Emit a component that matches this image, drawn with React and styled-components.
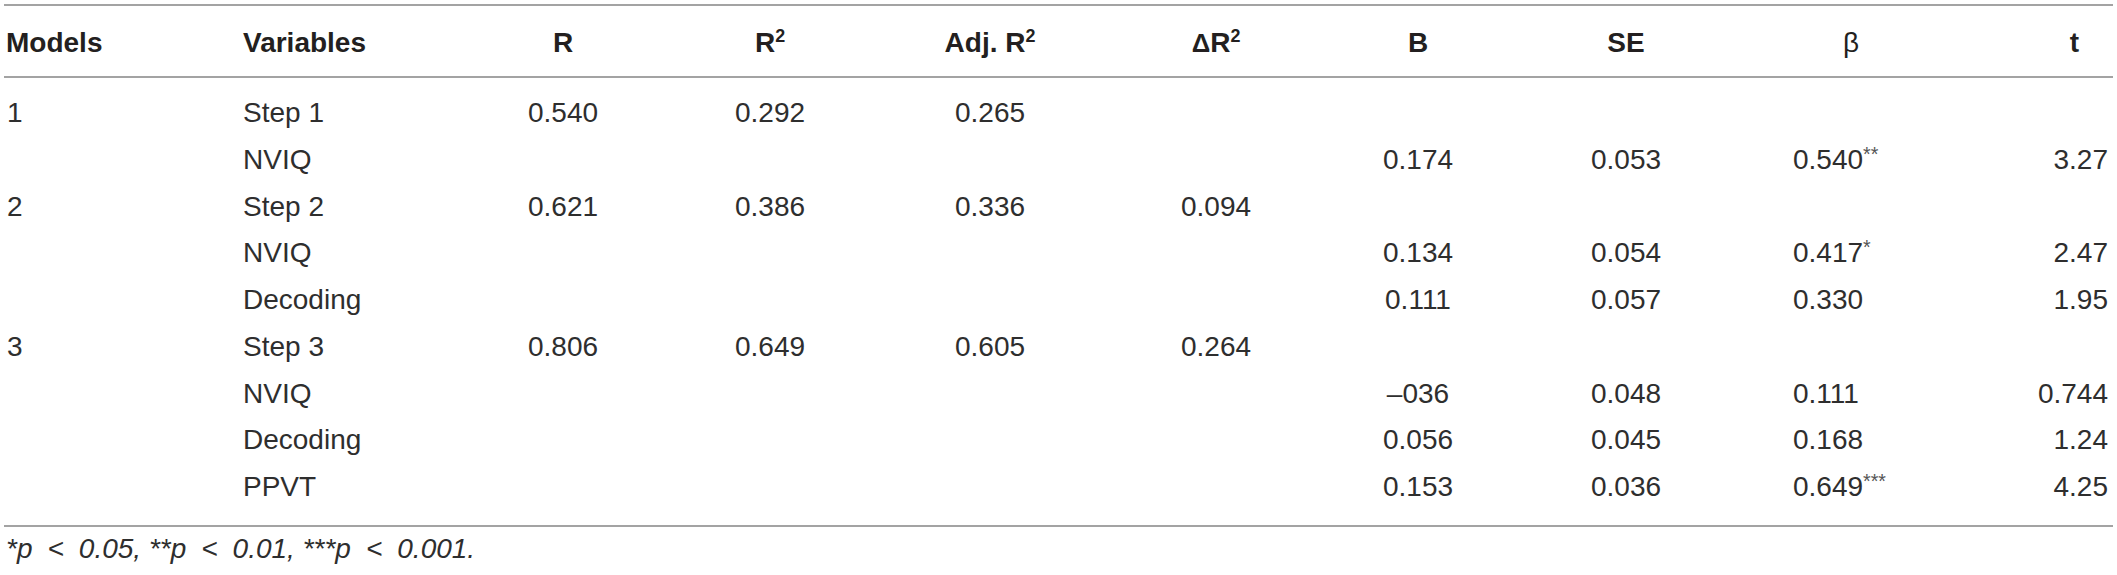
import React from 'react'
import styled, { createGlobalStyle } from 'styled-components'

const COLS = '239px 220px 200px 214px 226px 226px 178px 238px 212px 156px'

const rows = [
  { m: '1', v: 'Step 1', r: '0.540', r2: '0.292', adj: '0.265' },
  { v: 'NVIQ', b: '0.174', se: '0.053', beta: '0.540', stars: '**', t: '3.27' },
  { m: '2', v: 'Step 2', r: '0.621', r2: '0.386', adj: '0.336', dr2: '0.094' },
  { v: 'NVIQ', b: '0.134', se: '0.054', beta: '0.417', stars: '*', t: '2.47' },
  { v: 'Decoding', b: '0.111', se: '0.057', beta: '0.330', t: '1.95' },
  { m: '3', v: 'Step 3', r: '0.806', r2: '0.649', adj: '0.605', dr2: '0.264' },
  { v: 'NVIQ', b: '\u2013036', se: '0.048', beta: '0.111', t: '0.744' },
  { v: 'Decoding', b: '0.056', se: '0.045', beta: '0.168', t: '1.24' },
  { v: 'PPVT', b: '0.153', se: '0.036', beta: '0.649', stars: '***', t: '4.25' },
]

const App = () => {
  return (
    <>
      <GlobalStyle />
      <Page>
        <Table>
          <HeadRow>
            <Cell $pl={2}>Models</Cell>
            <Cell>Variables</Cell>
            <Cell $align="center">R</Cell>
            <Cell $align="center">R<Sup>2</Sup></Cell>
            <Cell $align="center">Adj. R<Sup>2</Sup></Cell>
            <Cell $align="center"><Delta>Δ</Delta>R<Sup>2</Sup></Cell>
            <Cell $align="center">B</Cell>
            <Cell $align="center">SE</Cell>
            <Cell $align="center"><Beta>β</Beta></Cell>
            <Cell $align="right" $pr={34}>t</Cell>
          </HeadRow>

          <Body>
            {rows.map((row, i) => (
              <Row key={i}>
                <Cell $pl={3}>{row.m}</Cell>
                <Cell>{row.v}</Cell>
                <Cell $align="center">{row.r}</Cell>
                <Cell $align="center">{row.r2}</Cell>
                <Cell $align="center">{row.adj}</Cell>
                <Cell $align="center">{row.dr2}</Cell>
                <Cell $align="center">{row.b}</Cell>
                <Cell $align="center">{row.se}</Cell>
                <Cell $pl={48}>
                  {row.beta}
                  {row.stars && <Stars>{row.stars}</Stars>}
                </Cell>
                <Cell $align="right" $pr={5}>{row.t}</Cell>
              </Row>
            ))}
          </Body>
        </Table>

        <Note>
          *p<Lt>&lt;</Lt>0.05, **p<Lt>&lt;</Lt>0.01, ***p<Lt>&lt;</Lt>0.001.
        </Note>
      </Page>
    </>
  )
}

export default App

const GlobalStyle = createGlobalStyle`
    body {
        margin: 0;
        background: #ffffff;
        font-family: "Liberation Sans", Arial, sans-serif;
    }
`

const Page = styled.div`
    padding: 4px 4px 0 4px;
    width: 2109px;
`

const Table = styled.div`
    border-top: 2px solid #a3a3a3;
    border-bottom: 2px solid #a3a3a3;
`

const HeadRow = styled.div`
    display: grid;
    grid-template-columns: ${COLS};
    padding-top: 4px;
    height: 66px;
    line-height: 66px;
    font-size: 28px;
    font-weight: 700;
    color: #231f20;
    border-bottom: 2px solid #a3a3a3;
`

const Body = styled.div`
    padding: 12px 0 14px;
`

const Row = styled.div`
    display: grid;
    grid-template-columns: ${COLS};
    height: 46.75px;
    line-height: 46.75px;
    font-size: 28px;
    color: #2e2e2e;
`

const Cell = styled.div`
    text-align: ${(p) => p.$align || 'left'};
    padding-left: ${(p) => p.$pl || 0}px;
    padding-right: ${(p) => p.$pr || 0}px;
    white-space: nowrap;
`

const Sup = styled.sup`
    font-size: 0.64em;
    line-height: 0;
    vertical-align: 0.55em;
`

const Delta = styled.span`
    font-size: 0.92em;
`

const Beta = styled.span`
    font-weight: 400;
`

const Stars = styled.sup`
    font-size: 0.7em;
    line-height: 0;
    vertical-align: 0.4em;
    color: #555;
`

const Note = styled.div`
    margin-top: 7px;
    font-size: 28px;
    font-style: italic;
    line-height: 30px;
    color: #2e2e2e;
    padding-left: 2px;
    white-space: nowrap;
`

const Lt = styled.span`
    display: inline-block;
    margin: 0 15px;
`
